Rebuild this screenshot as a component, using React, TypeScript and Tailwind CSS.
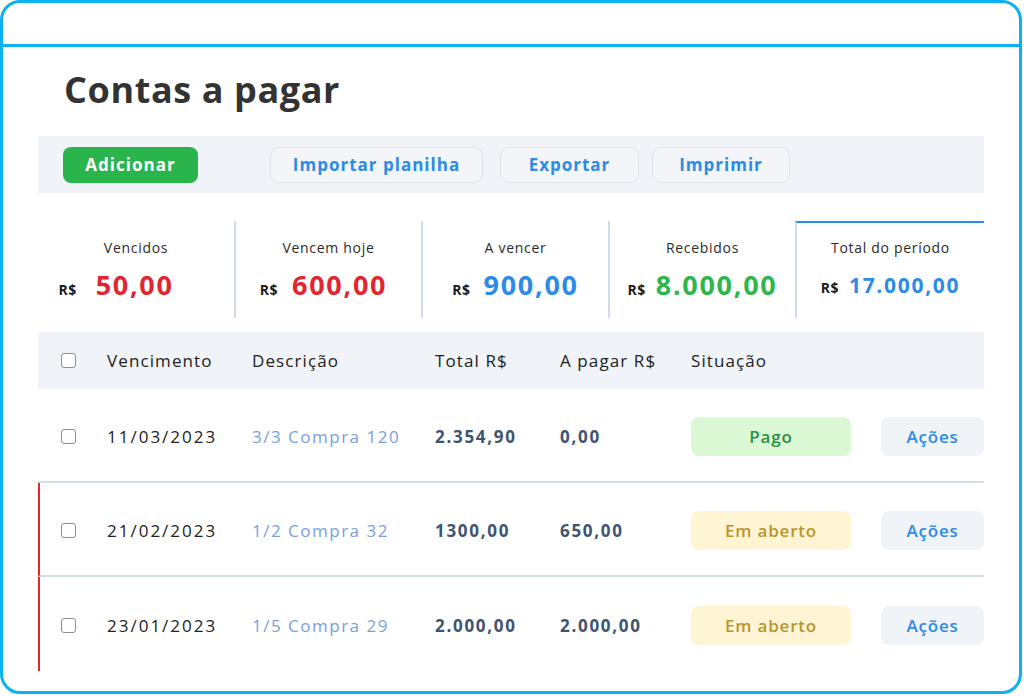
import React from "react";

const F = { fontFamily: '"Open Sans", "Noto Sans", sans-serif' };

function Check() {
  return <div className="w-[15px] h-[15px] border-[1.5px] border-[#8a8f96] rounded-[3px] bg-white" />;
}

type Row = { date: string; desc: string; total: string; pagar: string; status: "pago" | "aberto"; red?: boolean; last?: boolean };

const rows: Row[] = [
  { date: "11/03/2023", desc: "3/3 Compra 120", total: "2.354,90", pagar: "0,00", status: "pago" },
  { date: "21/02/2023", desc: "1/2 Compra 32", total: "1300,00", pagar: "650,00", status: "aberto", red: true },
  { date: "23/01/2023", desc: "1/5 Compra 29", total: "2.000,00", pagar: "2.000,00", status: "aberto", red: true, last: true },
];

const stats = [
  { label: "Vencidos", value: "50,00", color: "text-[#e1262f]", size: "text-[27px]", w: "w-[196px]", gap: "gap-[19px] mr-[40px]" },
  { label: "Vencem hoje", value: "600,00", color: "text-[#e1262f]", size: "text-[27px]", w: "w-[187px]", gap: "gap-[14px] mr-[10px]" },
  { label: "A vencer", value: "900,00", color: "text-[#2b8be8]", size: "text-[27px]", w: "w-[187px]", gap: "gap-[13px]" },
  { label: "Recebidos", value: "8.000,00", color: "text-[#2db64b]", size: "text-[27px]", w: "w-[187px]", gap: "gap-[10px]" },
  { label: "Total do período", value: "17.000,00", color: "text-[#2b8be8]", size: "text-[21px]", w: "w-[189px]", gap: "gap-[10px]", active: true },
];

export default function App() {
  return (
    <div className="w-[1024px] h-[696px] bg-white" style={F}>
      <div className="w-[1022px] h-[694px] border-[3px] border-[#0bb1f2] rounded-[20px] overflow-hidden flex flex-col">
        <div className="h-[44px] shrink-0 border-b-[3px] border-[#0bb1f2]" />
        <div className="pl-[35px] w-[981px] flex flex-col">
          <h1 className="text-[36px] leading-[40px] font-bold text-[#333333] pl-[26px] mt-[23px] tracking-[0.6px]">Contas a pagar</h1>
          <div className="mt-[26px] h-[57px] bg-[#f0f3f8] flex items-center pl-[25px] tracking-[1px]">
            <button className="w-[135px] h-[36px] rounded-[8px] bg-[#29b54b] text-white font-bold text-[17px]">Adicionar</button>
            <button className="ml-[72px] w-[213px] h-[36px] rounded-[9px] bg-[#f3f5f9] border-[1.5px] border-[#dde2e9] text-[#2b8be8] font-bold text-[17px]">Importar planilha</button>
            <button className="ml-[17px] w-[139px] h-[36px] rounded-[9px] bg-[#f3f5f9] border-[1.5px] border-[#dde2e9] text-[#2b8be8] font-bold text-[17px]">Exportar</button>
            <button className="ml-[13px] w-[138px] h-[36px] rounded-[9px] bg-[#f3f5f9] border-[1.5px] border-[#dde2e9] text-[#2b8be8] font-bold text-[17px]">Imprimir</button>
          </div>
          <div className="mt-[28px] h-[97px] flex">
            {stats.map((s, i) => (
              <div
                key={s.label}
                className={`${s.w} shrink-0 flex flex-col items-center ${i > 0 ? "border-l-2 border-[#d3dbe5]" : ""} ${s.active ? "border-t-2 border-t-[#2b8be8]" : ""}`}
              >
                <div className={`${s.active ? "mt-[15px]" : "mt-[17px]"} text-[14px] leading-[20px] text-[#2b2b2b] tracking-[0.7px]`}>{s.label}</div>
                <div className={`mt-[11px] flex items-baseline ${s.gap}`}>
                  <span className="text-[14px] font-bold text-[#1a1a1a] tracking-[0.5px]">R$</span>
                  <span className={`${s.size} font-bold ${s.color} leading-[32px] tracking-[1.7px]`}>{s.value}</span>
                </div>
              </div>
            ))}
          </div>
          <div className="mt-[14px] h-[57px] bg-[#f0f3f8] flex items-center text-[17px] text-[#222] tracking-[1.1px]">
            <div className="w-[69px] pl-[23px]"><Check /></div>
            <div className="w-[145px]">Vencimento</div>
            <div className="w-[183px]">Descrição</div>
            <div className="w-[125px]">Total R$</div>
            <div className="w-[131px]">A pagar R$</div>
            <div>Situação</div>
          </div>
          {rows.map((r, i) => (
            <div
              key={i}
              className={`h-[94px] pt-[3px] flex items-center text-[17px] ${!r.last ? "border-b-2 border-[#d5dde6]" : ""} ${r.red ? "border-l-2 border-l-[#e1262f]" : ""}`}
            >
              <div className={`${r.red ? "w-[67px] pl-[21px]" : "w-[69px] pl-[23px]"}`}><Check /></div>
              <div className="w-[145px] text-[#222] tracking-[2px]">{r.date}</div>
              <div className="w-[183px] text-[#7aa0da] tracking-[1.5px]">{r.desc}</div>
              <div className="w-[125px] font-bold text-[#3e5470] tracking-[1.7px]">{r.total}</div>
              <div className="w-[131px] font-bold text-[#3e5470] tracking-[1.7px]">{r.pagar}</div>
              <div
                className={`w-[160px] h-[39px] rounded-[8px] flex items-center justify-center font-semibold tracking-[0.8px] ${
                  r.status === "pago" ? "bg-[#dbf8d5] text-[#288f48]" : "bg-[#fff4d3] text-[#b8962f]"
                }`}
              >
                {r.status === "pago" ? "Pago" : "Em aberto"}
              </div>
              <div className="ml-[30px] w-[103px] h-[39px] rounded-[8px] bg-[#f0f3f8] flex items-center justify-center font-semibold text-[#2b8be8] tracking-[0.8px]">
                Ações
              </div>
            </div>
          ))}
        </div>
      </div>
    </div>
  );
}
